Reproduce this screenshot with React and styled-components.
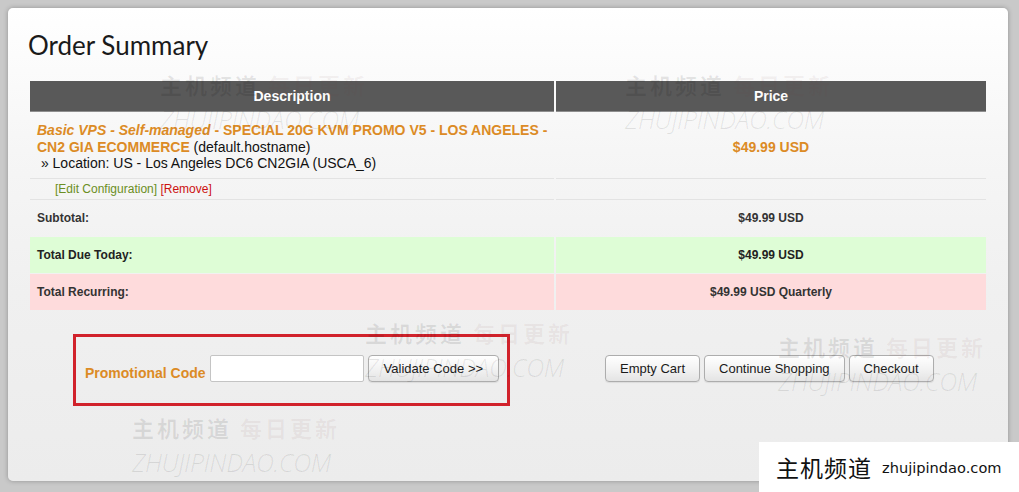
import React from "react";
import styled, { createGlobalStyle } from "styled-components";

const GlobalStyle = createGlobalStyle`
  html, body { margin: 0; padding: 0; }
  body {
    background: #c9c9c9;
    font-family: "Liberation Sans", Arial, sans-serif;
    overflow: hidden;
  }
`;

const Page = styled.div`
  position: relative;
  width: 1019px;
  height: 492px;
  padding: 8px 0 0 8px;
  box-sizing: border-box;
  overflow: hidden;
`;

const Panel = styled.div`
  width: 1000px;
  height: 473px;
  box-sizing: border-box;
  padding: 22px 22px 0;
  border-radius: 5px;
  background: linear-gradient(#ffffff 0%, #f6f6f6 30%, #f0f0f0 60%, #ececec 100%);
  box-shadow: 0 0 5px rgba(0, 0, 0, 0.28);
`;

const Title = styled.h1`
  margin: 0 0 21px -2px;
  font-family: Lato, "Open Sans", sans-serif;
  font-weight: 400;
  font-size: 26px;
  line-height: 30px;
  color: #1a1a1a;
`;

const Table = styled.div`
  width: 956px;
  display: flex;
  flex-direction: column;
`;

const Row = styled.div`
  display: grid;
  grid-template-columns: 524px 430px;
  column-gap: 2px;
  margin-bottom: ${(p) => p.$gap || 0}px;
`;

const HeadCell = styled.div`
  height: 30px;
  background: #595959;
  border-bottom: 1px solid #8e8e8e;
  color: #fff;
  font-weight: bold;
  font-size: 14px;
  display: flex;
  align-items: center;
  justify-content: center;
`;

const Cell = styled.div`
  box-sizing: border-box;
  height: ${(p) => p.$h}px;
  padding: ${(p) => p.$pad || "0 7px"};
  background: ${(p) => p.$bg || "transparent"};
  border-bottom: ${(p) => (p.$line ? "1px solid #e3e3e3" : "none")};
  display: flex;
  flex-direction: column;
  justify-content: ${(p) => p.$v || "center"};
  align-items: ${(p) => (p.$center ? "center" : "flex-start")};
  font-size: ${(p) => p.$fs || 12}px;
  font-weight: ${(p) => (p.$bold ? "bold" : "normal")};
  color: ${(p) => p.$color || "#333"};
`;

const ProductText = styled.div`
  font-size: 14px;
  line-height: 16.5px;
  color: #111;
`;

const Orange = styled.span`
  color: #dc8b25;
  font-weight: bold;
  font-style: ${(p) => (p.$italic ? "italic" : "normal")};
`;

const PriceOrange = styled.span`
  color: #dc8b25;
  font-weight: bold;
  font-size: 14px;
  margin-top: 4px;
`;

const EditLink = styled.span`
  color: ${(p) => p.$c};
  font-size: 12px;
`;

const Footer = styled.div`
  display: flex;
  align-items: flex-start;
  margin-top: 24px;
`;

const PromoBox = styled.div`
  margin-left: 43px;
  width: 437px;
  height: 72px;
  box-sizing: border-box;
  border: 3px solid #d1222b;
  padding: 18px 0 0 9px;
  display: flex;
  align-items: flex-start;
`;

const PromoLabel = styled.label`
  margin-top: 10px;
  color: #dc8b25;
  font-weight: bold;
  font-size: 14px;
  line-height: 16px;
  margin-right: 4px;
`;

const Input = styled.input`
  width: 154px;
  height: 27px;
  box-sizing: border-box;
  border: 1px solid #c4c4c4;
  border-radius: 2px;
  background: #fff;
  margin: 0 4px 0 0;
  padding: 0 4px;
`;

const Button = styled.button`
  height: 27px;
  box-sizing: border-box;
  padding: 0 ${(p) => p.$px || 14}px;
  border: 1px solid #adadad;
  border-radius: 4px;
  background: linear-gradient(#ffffff, #f3f3f3 50%, #e4e4e4);
  font-family: "Liberation Sans", Arial, sans-serif;
  font-size: 13px;
  color: #1a1a1a;
  box-shadow: 0 1px 1px rgba(0, 0, 0, 0.08);
`;

const ButtonGroup = styled.div`
  margin-left: 95px;
  margin-top: 21px;
  display: flex;
  gap: 4px;
`;

const Watermark = styled.div`
  position: absolute;
  left: ${(p) => p.$x}px;
  top: ${(p) => p.$y}px;
  pointer-events: none;
  display: flex;
  flex-direction: column;
  gap: 9px;
`;

const WmCn = styled.div`
  font-family: "Noto Sans CJK SC", sans-serif;
  font-weight: 700;
  font-size: 22px;
  line-height: 28px;
  letter-spacing: 3px;
  white-space: nowrap;
  color: rgba(0, 0, 0, 0.09);
`;

const WmLight = styled.span`
  color: rgba(120, 60, 60, 0.065);
`;

const WmEn = styled.div`
  font-family: "Open Sans", sans-serif;
  font-weight: 300;
  font-style: italic;
  font-size: 25px;
  line-height: 24px;
  letter-spacing: -0.4px;
  color: rgba(0, 0, 0, 0.09);
  white-space: nowrap;
`;

const Badge = styled.div`
  position: absolute;
  left: 759px;
  top: 442px;
  width: 260px;
  height: 50px;
  background: #fff;
  display: flex;
  align-items: center;
  padding-left: 17px;
  box-sizing: border-box;
  gap: 10px;
`;

const BadgeCn = styled.span`
  font-family: "Noto Sans CJK SC", sans-serif;
  font-size: 23px;
  color: #111;
  letter-spacing: 1px;
`;

const BadgeEn = styled.span`
  font-family: "DejaVu Sans", sans-serif;
  font-size: 14.6px;
  color: #111;
`;

const marks = [
  [160, 70],
  [625, 70],
  [365, 318],
  [778, 332],
  [132, 413],
];

export default function App() {
  return (
    <>
      <GlobalStyle />
      <Page>
        <Panel>
          <Title>Order Summary</Title>
          <Table>
            <Row>
              <HeadCell>Description</HeadCell>
              <HeadCell>Price</HeadCell>
            </Row>
            <Row>
              <Cell $h={67} $line $pad="10px 0 0 7px" $v="flex-start">
                <ProductText>
                  <Orange $italic>Basic VPS - Self-managed</Orange>
                  <Orange> - SPECIAL 20G KVM PROMO V5 - LOS ANGELES - CN2 GIA ECOMMERCE</Orange>{" "}
                  (default.hostname)
                  <br />
                  &nbsp;» Location: US - Los Angeles DC6 CN2GIA (USCA_6)
                </ProductText>
              </Cell>
              <Cell $h={67} $line $center>
                <PriceOrange>$49.99 USD</PriceOrange>
              </Cell>
            </Row>
            <Row>
              <Cell $h={21} $line $pad="0 25px">
                <div>
                  <EditLink $c="#6b8e23">[Edit Configuration]</EditLink>{" "}
                  <EditLink $c="#cc1111">[Remove]</EditLink>
                </div>
              </Cell>
              <Cell $h={21} $line />
            </Row>
            <Row $gap={1}>
              <Cell $h={36} $bold>Subtotal:</Cell>
              <Cell $h={36} $bold $center>$49.99 USD</Cell>
            </Row>
            <Row $gap={1}>
              <Cell $h={36} $bold $bg="#defdd6" $color="#222">Total Due Today:</Cell>
              <Cell $h={36} $bold $center $bg="#defdd6" $color="#222">$49.99 USD</Cell>
            </Row>
            <Row>
              <Cell $h={36} $bold $bg="#fedbdc">Total Recurring:</Cell>
              <Cell $h={36} $bold $center $bg="#fedbdc">$49.99 USD Quarterly</Cell>
            </Row>
          </Table>
          <Footer>
            <PromoBox>
              <PromoLabel>Promotional Code</PromoLabel>
              <Input type="text" />
              <Button $px={15}>Validate Code &gt;&gt;</Button>
            </PromoBox>
            <ButtonGroup>
              <Button>Empty Cart</Button>
              <Button>Continue Shopping</Button>
              <Button>Checkout</Button>
            </ButtonGroup>
          </Footer>
        </Panel>
        {marks.map(([x, y], i) => (
          <Watermark key={i} $x={x} $y={y}>
            <WmCn>
              主机频道 <WmLight>每日更新</WmLight>
            </WmCn>
            <WmEn>ZHUJIPINDAO.COM</WmEn>
          </Watermark>
        ))}
        <Badge>
          <BadgeCn>主机频道</BadgeCn>
          <BadgeEn>zhujipindao.com</BadgeEn>
        </Badge>
      </Page>
    </>
  );
}
